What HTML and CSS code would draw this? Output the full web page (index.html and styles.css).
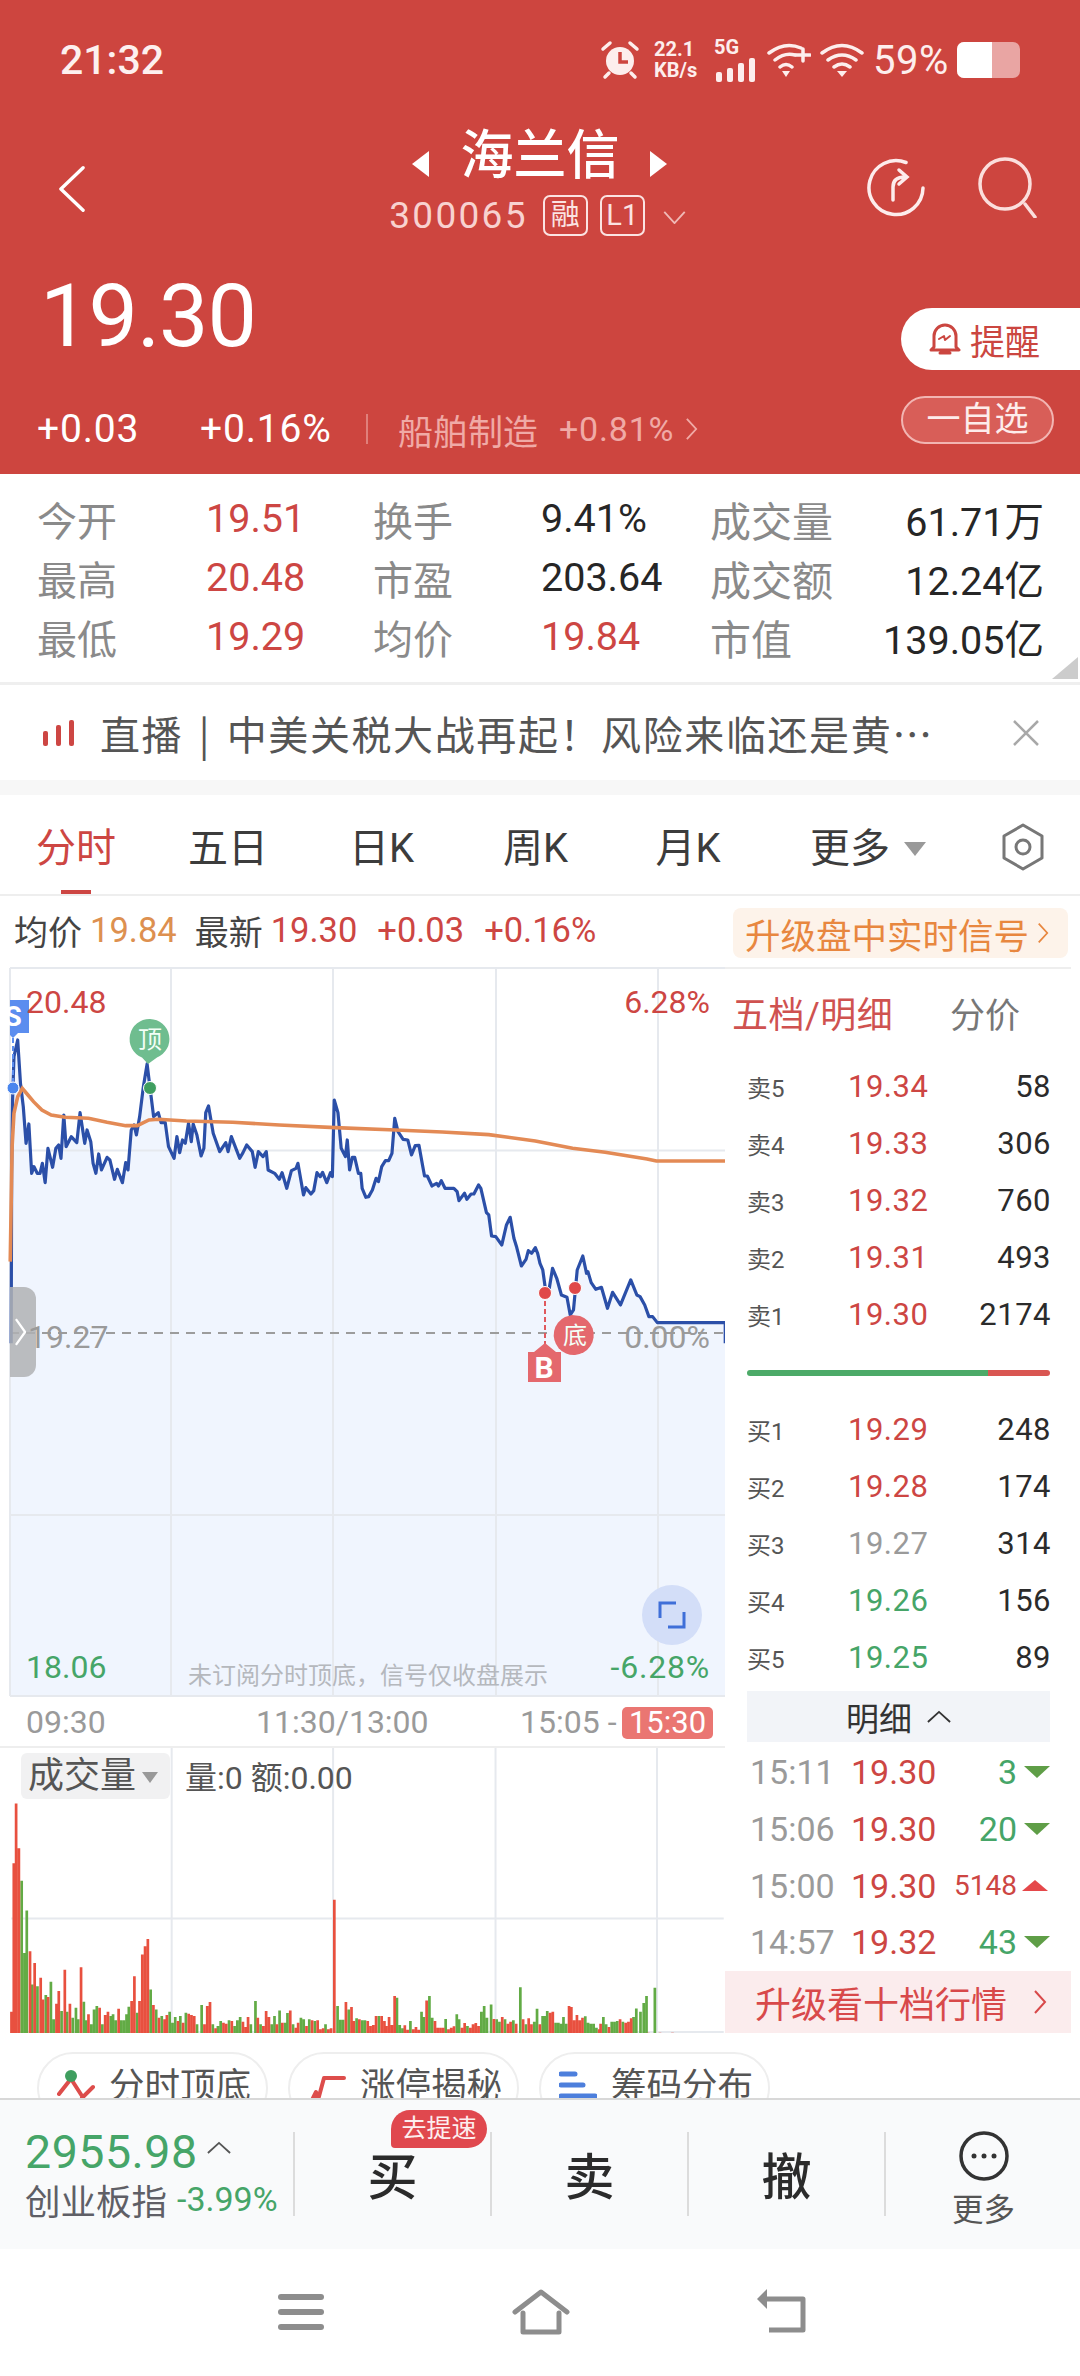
FILE: index.html
```html
<!DOCTYPE html>
<html lang="zh">
<head>
<meta charset="utf-8">
<title>海兰信</title>
<link rel="stylesheet" href="styles.css">
</head>
<body>
<div class="page">
<header class="hero">
  <div class="status">
    <span class="clock">21:32</span>
    <div class="sys">
      <svg class="i-alarm" viewBox="0 0 40 40"><circle cx="20" cy="21" r="14" fill="#fdeeed"/><path d="M20 12v10h8" class="st-red"/><path d="M3 9l7-6M37 9l-7-6M9 33l-4 4M31 33l4 4" class="st-pale"/></svg>
      <div class="speed"><span>22.1</span><span>KB/s</span></div>
      <div class="net">
        <span class="fiveg">5G</span>
        <svg class="i-bars" viewBox="0 0 40 24"><rect x="0" y="14" width="6" height="10" rx="2"/><rect x="11" y="10" width="6" height="14" rx="2"/><rect x="22" y="5" width="6" height="19" rx="2"/><rect x="33" y="0" width="6" height="24" rx="2"/></svg>
      </div>
      <svg class="i-wifi" viewBox="0 0 44 36"><path d="M2 11Q18 -1 34 6M8 18Q18 10 28 13M13 25Q19 20 25 25" class="st-pale"/><path d="M15 29h8l-4 6z" fill="#fdeeed"/><path d="M29 13h14M36 7v12" class="st-pale"/></svg>
      <svg class="i-wifi" viewBox="0 0 44 36"><path d="M2 11Q22 -4 42 11M8 18Q22 8 36 18M14 25Q22 19 30 25" class="st-pale"/><path d="M17 29h10l-5 6z" fill="#fdeeed"/></svg>
      <span class="pct">59%</span>
      <div class="battery"><div class="battery-fill"></div></div>
    </div>
  </div>
  <div class="nav">
    <div class="nav-left"><svg class="i-back" viewBox="0 0 28 48"><path d="M26 2L3 24l23 22"/></svg></div>
    <div class="nav-mid">
      <div class="title-row"><span class="tri-l"></span><h1 class="title">海兰信</h1><span class="tri-r"></span></div>
      <div class="code-row"><span class="code">300065</span><span class="tag">融</span><span class="tag">L1</span><svg class="i-down" viewBox="0 0 24 14"><path d="M1 1l11 12L23 1"/></svg></div>
    </div>
    <div class="nav-right">
      <svg class="i-refresh" viewBox="0 0 60 60"><path d="M40 4.500A27 27 0 1 0 57 30"/><path d="M27 42V29Q27 19 39 19M33 12l8 7-8 7"/></svg>
      <svg class="i-search" viewBox="0 0 62 62"><circle cx="28" cy="28" r="25"/><path d="M48 48l10 13"/></svg>
    </div>
  </div>
  <div class="quote">
    <div class="quote-left">
      <div class="price">19.30</div>
      <div class="change">
        <span class="chg-a">+0.03</span><span class="chg-b">+0.16%</span><span class="chg-sep"></span><span class="sector">船舶制造</span><span class="sector-pct">+0.81%</span><svg class="i-more" viewBox="0 0 14 26"><path d="M2 2l10 11L2 24"/></svg>
      </div>
    </div>
    <div class="quote-right">
      <div class="remind"><svg class="i-bell" viewBox="0 0 32 36"><path d="M5 26V15a11 11 0 0 1 22 0v11l3 3H2zM11 32h10" class="bell-line"/><path d="M10 18l5-3 1 4 5-4" class="bell-line thin"/></svg><span>提醒</span></div>
      <div class="watch">一自选</div>
    </div>
  </div>
</header>

<section class="stats">
  <span class="lab">今开</span><span class="val up">19.51</span><span class="lab">换手</span><span class="val">9.41%</span><span class="lab">成交量</span><span class="val end">61.71万</span>
  <span class="lab">最高</span><span class="val up">20.48</span><span class="lab">市盈</span><span class="val">203.64</span><span class="lab">成交额</span><span class="val end">12.24亿</span>
  <span class="lab">最低</span><span class="val up">19.29</span><span class="lab">均价</span><span class="val up">19.84</span><span class="lab">市值</span><span class="val end">139.05亿</span>
  <span class="corner"></span>
</section>

<section class="news">
  <svg class="i-live" viewBox="0 0 32 26"><rect x="0" y="11" width="5" height="15" rx="2"/><rect x="13" y="5" width="5" height="21" rx="2"/><rect x="26" y="0" width="5" height="26" rx="2"/></svg>
  <span class="news-text">直播 | 中美关税大战再起！风险来临还是黄…</span>
  <svg class="i-close" viewBox="0 0 28 28"><path d="M2 2l24 24M26 2L2 26"/></svg>
</section>

<nav class="tabs">
  <span class="tab active">分时</span><span class="tab">五日</span><span class="tab">日K</span><span class="tab">周K</span><span class="tab">月K</span>
  <span class="tab more">更多<i class="caret"></i></span>
  <svg class="i-gear" viewBox="0 0 44 48"><path d="M22 2l19 11v22L22 46 3 35V13z"/><circle cx="22" cy="24" r="7"/></svg>
</nav>

<div class="infoline">
  <span class="inf-l">均价</span><span class="inf-avg">19.84</span><span class="inf-l second">最新</span><span class="inf-up">19.30</span><span class="inf-up spaced">+0.03</span><span class="inf-up spaced">+0.16%</span>
  <span class="signal">升级盘中实时信号<svg class="i-more-s" viewBox="0 0 14 26"><path d="M2 2l10 11L2 24"/></svg></span>
</div>

<main class="board">
  <div class="charts">
    <div class="price-chart">
      <svg class="chart-svg" viewBox="0 0 725 738">
        <defs>
          <clipPath id="clip-line"><rect x="0" y="0" width="1560" height="1150"/></clipPath>
          <path id="pl" class="ns" d="M22 2208L25 640 27 420 30 290 38 240 44 370 50 440 56 550 62 492 68 640 73 620 80 640 86 640 91 610 97 668 103 565 113 622 120 565 126 555 131 595 137 465 142 560 153 530 165 548 172 458 182 550 187 510 195 545 200 610 206 640 212 582 218 630 230 592 236 600 246 658 252 628 263 668 270 608 275 630 282 510 288 495 293 525 300 470 308 380 316 312 322 380 330 470 340 458 346 488 355 488 362 560 374 595 380 530 386 578 392 540 398 550 405 490 411 545 415 492 423 525 432 588 438 565 442 458 448 438 458 520 472 575 485 548 490 575 497 530 515 595 522 578 530 555 542 575 548 622 555 575 565 590 572 575 576 630 590 640 600 658 606 638 616 685 626 632 636 625 640 610 652 705 657 683 668 702 674 692 681 638 688 650 693 637 702 668 710 638 714 650 718 420 726 458 733 565 742 590 746 540 751 630 757 592 762 592 770 640 775 640 778 685 786 712 792 710 800 690 808 655 813 665 820 620 828 602 835 602 842 580 848 475 855 515 866 538 876 540 884 585 892 557 900 556 908 618 912 648 918 648 928 678 938 670 942 678 948 662 956 685 975 685 982 695 986 722 998 700 1003 718 1012 702 1018 702 1028 675 1033 685 1045 758 1050 765 1056 828 1065 830 1078 855 1088 795 1096 772 1104 835 1110 862 1120 918 1130 898 1135 872 1142 880 1150 863 1155 880 1160 910 1166 930 1172 990 1180 985 1187 925 1196 955 1206 1005 1218 1012 1225 1065 1232 1050 1240 930 1252 888 1260 940 1263 935 1270 968 1280 988 1292 982 1305 1045 1316 997 1333 1035 1355 960 1368 1005 1375 1010 1385 1035 1394 1070 1402 1070 1412 1088 1558 1088 1558 2208Z"/>
        </defs>
        <g transform="scale(.4655 .3333)"><use href="#pl" class="area"/></g>
        <path class="grid" d="M10 8H725M10 190.500H725M10 555H725M10 736H725M10 8V736M171 8V736M333 8V736M496 8V736M658 8V736"/>
        <path class="zero" d="M10 373H725"/>
        <g transform="scale(.4655 .3333)">
          <use href="#pl" class="line" clip-path="url(#clip-line)"/>
          <path class="avg ns" d="M22 905L26 560 30 460 38 410 48 385 60 405 72 425 90 450 110 465 140 472 190 475 230 487 270 497 295 497 320 480 340 478 400 483 500 487 600 495 720 503 850 510 950 516 1050 524 1150 543 1230 565 1300 577 1390 597 1410 603 1558 603"/>
        </g>
        <path class="sig-dash blue" d="M13 78V128"/>
        <path class="tag-s" d="M10 40H29V73H18L13 78 10 75Z"/>
        <text class="tag-st" x="13" y="66">S</text>
        <circle class="dot-s" cx="13" cy="128" r="6"/>
        <path class="bub-g" d="M150 59a20 20 0 0 1 7 38.500L148 104 142 97.500A20 20 0 0 1 150 59Z"/>
        <text class="bub-t" x="150" y="88">顶</text>
        <circle class="dot-g" cx="150" cy="128" r="6.500"/>
        <path class="sig-dash red" d="M545 333V385"/>
        <circle class="dot-r" cx="545" cy="333" r="6.500"/>
        <circle class="dot-r" cx="575" cy="328" r="6.500"/>
        <path class="bub-r" d="M572 355L580 356A20 20 0 1 1 565 357Z"/>
        <text class="bub-t" x="575" y="384">底</text>
        <path class="tag-b" d="M545 383L556 392H561V422H528V392H534Z"/>
        <text class="tag-bt" x="544" y="418">B</text>
        <ellipse class="exp-bg" cx="672" cy="655" rx="30" ry="30"/>
        <path class="exp" d="M660 658V643H676M684 652V667H668"/>
      </svg>
      <span class="handle"><svg class="i-handle" viewBox="0 0 12 30"><path d="M1 1l10 14L1 29"/></svg></span>
      <span class="cl cl-hi up">20.48</span>
      <span class="cl cr-hi up">6.28%</span>
      <span class="cl cl-mid flat">19.27</span>
      <span class="cl cr-mid flat">0.00%</span>
      <span class="cl cl-lo down">18.06</span>
      <span class="cl cr-lo down wide">-6.28%</span>
      <span class="wm">未订阅分时顶底，信号仅收盘展示</span>
    </div>
    <div class="axis">
      <span class="ax-a">09:30</span><span class="ax-b">11:30/13:00</span><span class="ax-c">15:05 -</span><span class="ax-d">15:30</span>
    </div>
    <div class="vol-chart">
      <svg class="chart-svg" viewBox="0 0 725 286">
        <path class="grid" d="M10 171H725M10 285H725M171 0V285M333 0V285M496 0V285M658 0V285"/>
        <g transform="translate(0 -6) scale(.4655 .3333)">
          <path class="bar-g" d="M44 418V880M50 635V880M55 507V880M67 730V880M78 735V880M96 762V880M107 722V880M113 835V880M130 810V880M142 812V880M154 830V880M161 800V880M166 835V880M178 782V880M183 838V880M194 850V880M200 805V880M206 795V880M218 850V880M236 825V880M241 820V880M247 838V880M258 838V880M264 838V880M270 820V880M275 797V880M293 815V880M322 745V880M334 805V880M346 825V880M363 812V880M369 845V880M375 828V880M386 825V880M398 815V880M422 850V880M432 792V880M456 850V880M467 855V880M473 840V880M491 838V880M503 855V880M509 838V880M515 828V880M538 850V880M548 780V880M559 850V880M583 850V880M589 825V880M600 808V880M612 845V880M617 816V880M629 850V880M646 830V880M652 835V880M664 835V880M676 840V880M699 850V880M725 795V880M731 836V880M737 836V880M749 805V880M766 832V880M778 838V880M784 838V880M814 825V880M853 770V880M859 852V880M865 862V880M882 840V880M906 812V880M911 828V880M923 765V880M929 830V880M958 834V880M982 820V880M987 835V880M1005 855V880M1035 812V880M1041 795V880M1047 830V880M1056 790V880M1068 835V880M1074 842V880M1086 835V880M1104 838V880M1119 738V880M1131 850V880M1149 842V880M1155 803V880M1167 825V880M1172 825V880M1177 810V880M1195 845V880M1201 845V880M1207 848V880M1212 828V880M1218 848V880M1259 826V880M1265 845V880M1271 848V880M1277 848V880M1283 860V880M1298 828V880M1304 850V880M1316 842V880M1322 842V880M1328 840V880M1340 842V880M1363 828V880M1369 802V880M1378 812V880M1385 786V880M1391 765V880M1409 740V880"/>
          <path class="bar-r" d="M22 812V880M27 365V880M32 185V880M38 320V880M62 630V880M72 665V880M85 710V880M90 775V880M101 768V880M119 788V880M124 750V880M137 686V880M148 788V880M172 678V880M188 820V880M212 800V880M224 822V880M230 812V880M253 803V880M281 780V880M287 705V880M298 780V880M304 640V880M310 615V880M316 593V880M328 792V880M340 830V880M352 835V880M357 822V880M381 840V880M392 845V880M404 818V880M410 822V880M416 825V880M438 850V880M444 795V880M450 783V880M462 862V880M479 845V880M485 848V880M497 840V880M521 842V880M527 858V880M532 828V880M553 830V880M565 855V880M571 810V880M577 828V880M594 850V880M606 845V880M623 808V880M635 860V880M640 845V880M658 855V880M670 838V880M682 838V880M688 865V880M694 862V880M705 865V880M711 862V880M718 475V880M743 783V880M755 798V880M760 840V880M772 835V880M790 840V880M796 855V880M802 852V880M808 825V880M820 825V880M826 840V880M830 855V880M836 828V880M842 852V880M848 765V880M870 853V880M876 866V880M888 865V880M894 858V880M900 866V880M917 778V880M935 840V880M941 860V880M947 860V880M953 860V880M964 865V880M970 860V880M976 856V880M993 860V880M999 846V880M1011 860V880M1017 850V880M1023 846V880M1029 855V880M1062 834V880M1080 828V880M1092 848V880M1098 842V880M1110 848V880M1125 835V880M1137 832V880M1143 850V880M1161 850V880M1183 815V880M1189 812V880M1224 795V880M1229 798V880M1235 838V880M1241 822V880M1247 838V880M1253 830V880M1289 865V880M1292 848V880M1310 858V880M1334 835V880M1346 845V880M1352 842V880M1358 832V880M1395 875V880M1420 875V880M1447 875V880"/>
        </g>
      </svg>
      <span class="vol-tag">成交量<i class="caret small"></i></span>
      <span class="vol-info">量:0 额:0.00</span>
    </div>
  </div>
  <aside class="book">
    <div class="book-head"><span class="bh-a">五档/明细</span><span class="bh-b">分价</span></div>
    <div class="levels">
      <div class="lv"><span class="lv-l">卖5</span><span class="up">19.34</span><span class="lv-q">58</span></div>
      <div class="lv"><span class="lv-l">卖4</span><span class="up">19.33</span><span class="lv-q">306</span></div>
      <div class="lv"><span class="lv-l">卖3</span><span class="up">19.32</span><span class="lv-q">760</span></div>
      <div class="lv"><span class="lv-l">卖2</span><span class="up">19.31</span><span class="lv-q">493</span></div>
      <div class="lv"><span class="lv-l">卖1</span><span class="up">19.30</span><span class="lv-q">2174</span></div>
    </div>
    <div class="ratio"><div class="ratio-g"></div><div class="ratio-r"></div></div>
    <div class="levels buys">
      <div class="lv"><span class="lv-l">买1</span><span class="up">19.29</span><span class="lv-q">248</span></div>
      <div class="lv"><span class="lv-l">买2</span><span class="up">19.28</span><span class="lv-q">174</span></div>
      <div class="lv"><span class="lv-l">买3</span><span class="flat">19.27</span><span class="lv-q">314</span></div>
      <div class="lv"><span class="lv-l">买4</span><span class="down">19.26</span><span class="lv-q">156</span></div>
      <div class="lv"><span class="lv-l">买5</span><span class="down">19.25</span><span class="lv-q">89</span></div>
    </div>
    <div class="detail-head">明细<svg class="i-up" viewBox="0 0 26 14"><path d="M1 13L13 2l12 11"/></svg></div>
    <div class="ticks">
      <div class="tk"><span class="tk-t">15:11</span><span class="up">19.30</span><span class="tk-q down">3</span><i class="tri-d"></i></div>
      <div class="tk"><span class="tk-t">15:06</span><span class="up">19.30</span><span class="tk-q down">20</span><i class="tri-d"></i></div>
      <div class="tk"><span class="tk-t">15:00</span><span class="up">19.30</span><span class="tk-q up small-q">5148</span><i class="tri-u"></i></div>
      <div class="tk"><span class="tk-t">14:57</span><span class="up">19.32</span><span class="tk-q down">43</span><i class="tri-d"></i></div>
    </div>
    <div class="upgrade"><span>升级看十档行情</span><svg class="i-more-u" viewBox="0 0 14 26"><path d="M2 2l10 11L2 24"/></svg></div>
  </aside>
</main>

<div class="chips">
  <span class="chip"><svg class="i-chip" viewBox="0 0 38 36"><path d="M2 24L13 10M16 12l9 14M25 28l11-11" class="chip-r"/><circle cx="14" cy="6" r="6" fill="#3f9e5f"/></svg>分时顶底</span>
  <span class="chip"><svg class="i-chip" viewBox="0 0 38 36"><path d="M2 34l6-12 2 8 6-22h20" class="chip-r"/></svg>涨停揭秘</span>
  <span class="chip"><svg class="i-chip" viewBox="0 0 38 36"><path d="M2 4h14M2 15h22M2 26h34" class="chip-b"/></svg>筹码分布</span>
</div>

<footer class="trade">
  <div class="index">
    <div class="idx-top"><span class="idx-val">2955.98</span><svg class="i-up idx-up" viewBox="0 0 26 14"><path d="M1 13L13 2l12 11"/></svg></div>
    <div class="idx-bot"><span class="idx-name">创业板指</span><span class="idx-pct">-3.99%</span></div>
  </div>
  <div class="act"><span class="act-t">买</span><span class="speedup">去提速</span></div>
  <div class="act"><span class="act-t">卖</span></div>
  <div class="act"><span class="act-t">撤</span></div>
  <div class="act last"><svg class="i-dots" viewBox="0 0 50 50"><circle cx="25" cy="25" r="23"/><circle class="dot" cx="15" cy="25" r="2.500"/><circle class="dot" cx="25" cy="25" r="2.500"/><circle class="dot" cx="35" cy="25" r="2.500"/></svg><span class="act-m">更多</span></div>
</footer>

<div class="sysnav">
  <svg class="i-menu" viewBox="0 0 46 36"><rect x="0" y="0" width="46" height="6" rx="3"/><rect x="0" y="15" width="46" height="6" rx="3"/><rect x="0" y="30" width="46" height="6" rx="3"/></svg>
  <svg class="i-home" viewBox="0 0 58 46"><path d="M3 23L29 3l26 20M11 24V43H47V24" /></svg>
  <svg class="i-ret" viewBox="0 0 50 44"><path d="M3 10H46V41H12"/><path class="fill" d="M10 0V20L0 10Z"/></svg>
</div>
</div>
</body>
</html>
```
FILE: styles.css
```css
* { box-sizing: border-box; margin: 0; padding: 0; }
html, body { background: #fff; }
body { font-family: Roboto, "Noto Sans CJK SC", sans-serif; color: #2b2b2b; }
i { display: inline-block; font-style: normal; }
.page { position: relative; width: 1080px; height: 2376px; overflow: hidden; display: flex; flex-direction: column; }
.up { color: #cd4643; }
.down { color: #46a568; }
.flat { color: #9a9a9a; }

/* hero */
.hero { height: 474px; background: #cd453f; color: #fff; display: flex; flex-direction: column; flex: none; }
.status { height: 120px; display: flex; align-items: center; justify-content: space-between; padding: 0 60px 0 60px; }
.clock { font-size: 41px; font-weight: 500; color: #fdf0ef; }
.sys { display: flex; align-items: center; }
.i-alarm { width: 40px; height: 40px; margin-right: 14px; }
.st-red { fill: none; stroke: #cd453f; stroke-width: 3.500; }
.st-pale { fill: none; stroke: #fdeeed; stroke-width: 3.500; stroke-linecap: round; }
.speed { display: flex; flex-direction: column; font-size: 20px; font-weight: 700; line-height: 21px; color: #fdeeed; width: 45px; margin-right: 15px; }
.net { width: 42px; height: 40px; position: relative; margin-right: 11px; }
.fiveg { position: absolute; left: 0; top: -5px; font-size: 20px; font-weight: 700; color: #fdeeed; }
.i-bars { position: absolute; left: 2px; bottom: -2px; width: 40px; height: 24px; fill: #fdeeed; }
.i-wifi { width: 44px; height: 36px; margin-right: 9px; }
.pct { font-size: 40px; font-weight: 400; color: #fdeeed; margin-right: 10px; width: 74px; white-space: nowrap; letter-spacing: .5px; }
.battery { width: 63px; height: 36px; border-radius: 7px; background: #e9a5a3; overflow: hidden; }
.battery-fill { width: 35px; height: 36px; background: #fff; }

.nav { display: grid; grid-template-columns: 1fr auto 1fr; height: 118px; flex: none; }
.nav-left { padding: 45px 0 0 58px; }
.i-back { width: 27px; height: 48px; fill: none; stroke: #fff; stroke-width: 3.500; stroke-linecap: round; stroke-linejoin: round; }
.nav-mid { display: flex; flex-direction: column; align-items: center; }
.title-row { height: 72px; display: flex; align-items: center; }
.title { font-size: 53px; font-weight: 500; color: #fff; margin: 0 31px; line-height: 72px; }
.tri-l, .tri-r { width: 0; height: 0; margin-top: 15px; border-top: 13px solid transparent; border-bottom: 13px solid transparent; }
.tri-l { border-right: 17px solid #fff; }
.tri-r { border-left: 17px solid #fff; }
.code-row { height: 46px; display: flex; align-items: center; margin-right: 5px; }
.code { font-size: 37px; color: #f8d2d0; letter-spacing: 2.300px; margin-right: 15px; }
.tag { width: 45px; height: 41px; border: 2px solid #fbe3e2; border-radius: 7px; font-size: 29px; line-height: 36px; text-align: center; color: #fbe3e2; margin-right: 12px; }
.i-down { width: 23px; height: 13px; margin: 4px 0 0 6px; fill: none; stroke: #f0b9b6; stroke-width: 2; }
.nav-right { display: flex; justify-content: flex-end; align-items: flex-start; padding: 38px 41px 0 0; gap: 51px; }
.i-refresh { width: 60px; height: 60px; fill: none; stroke: #fdecec; stroke-width: 3.500; stroke-linecap: round; }
.i-search { width: 62px; height: 62px; fill: none; stroke: #fbdedc; stroke-width: 3.500; stroke-linecap: round; margin-top: -2px; }

.quote { display: flex; justify-content: space-between; flex: 1; }
.quote-left { padding-left: 37px; display: flex; flex-direction: column; }
.price { font-size: 88px; line-height: 92px; margin: 32px 0 0 3px; letter-spacing: -1px; color: #fff; }
.change { display: flex; align-items: center; height: 60px; margin-top: 37px; }
.chg-a { font-size: 39px; width: 163px; letter-spacing: .8px; }
.chg-b { font-size: 39px; width: 166px; letter-spacing: .8px; }
.chg-sep { width: 2px; height: 30px; background: #e0807b; margin-right: 30px; }
.sector { font-size: 35px; color: #f0aaa6; margin-right: 21px; }
.sector-pct { font-size: 34px; color: #f0aaa6; margin-right: 11px; letter-spacing: .8px; }
.i-more { width: 13px; height: 26px; fill: none; stroke: #f0aaa6; stroke-width: 2; }
.quote-right { display: flex; flex-direction: column; align-items: flex-end; padding-top: 70px; }
.remind { width: 179px; height: 62px; background: #fff; border-radius: 31px 0 0 31px; display: flex; align-items: center; padding-left: 28px; color: #cb4640; font-size: 35px; gap: 9px; }
.i-bell { width: 32px; height: 36px; }
.bell-line { fill: none; stroke: #cb4640; stroke-width: 3; stroke-linejoin: round; stroke-linecap: round; }
.bell-line.thin { stroke-width: 2; }
.watch { width: 153px; height: 48px; margin: 26px 26px 0 0; border: 2px solid #f2b5b2; background: #d85e58; border-radius: 24px; font-size: 34px; line-height: 42px; text-align: center; color: #fdeceb; }

/* stats */
.stats { position: relative; flex: none; height: 211px; border-bottom: 3px solid #efefef; display: grid; grid-template-columns: 169px 167px 168px 169px 122px 212px; grid-auto-rows: 59px; padding: 15px 0 0 37px; align-items: center; }
.lab { font-size: 40px; color: #8a8a8a; white-space: nowrap; }
.lab:nth-of-type(6n+5) { font-size: 41px; }
.val { font-size: 39.500px; color: #262626; white-space: nowrap; }
.val.up { color: #cd4643; }
.val.end { text-align: right; }
.corner { position: absolute; right: 2px; bottom: 3px; width: 26px; height: 22px; background: #cccccc; clip-path: polygon(100% 0, 100% 100%, 0 100%); }

/* news */
.news { flex: none; display: flex; align-items: center; padding-left: 43px; border-bottom: 15px solid #f7f7f7; box-sizing: content-box; height: 95px; }
.i-live { width: 32px; height: 26px; fill: #cd4643; margin-right: 25px; }
.news-text { font-family: "Noto Sans CJK SC", sans-serif; font-size: 40px; letter-spacing: 1.600px; word-spacing: 5px; color: #555; white-space: nowrap; width: 912px; }
.i-close { width: 28px; height: 28px; fill: none; stroke: #a8a8a8; stroke-width: 2.500; }

/* tabs */
.tabs { position: relative; flex: none; height: 101px; border-bottom: 2px solid #eeeeee; display: grid; grid-template-columns: 152px 152px 155px 153px 152px 1fr; align-items: center; }
.tab { font-size: 40px; color: #3c3c3c; text-align: center; }
.tab.active { color: #cd4643; position: relative; align-self: stretch; display: flex; align-items: center; justify-content: center; }
.tab.active::after { content: ""; position: absolute; left: 61px; bottom: 0; width: 30px; height: 4px; background: #cd4643; }
.tab.more { text-align: left; padding-left: 46px; }
.caret { width: 0; height: 0; border-left: 11px solid transparent; border-right: 11px solid transparent; border-top: 14px solid #999; margin-left: 14px; vertical-align: 6px; }
.i-gear { position: absolute; left: 1001px; top: 28px; width: 44px; height: 48px; fill: none; stroke: #777; stroke-width: 3; stroke-linejoin: round; }

/* info line */
.infoline { flex: none; height: 64px; display: flex; align-items: center; padding: 4px 0 0 14px; font-size: 34.500px; white-space: nowrap; }
.inf-l { color: #444; font-size: 34px; margin-right: 8px; }
.inf-l.second { margin-left: 18px; }
.inf-avg { color: #dd9050; }
.inf-up { color: #cd4643; }
.inf-up.spaced { margin-left: 20px; }
.signal { position: absolute; left: 733px; top: 908px; width: 335px; height: 50px; background: #fdf3ea; border-radius: 8px; color: #e8873f; font-size: 35.500px; display: flex; align-items: center; padding-left: 12px; gap: 8px; }
.i-more-s { width: 12px; height: 24px; fill: none; stroke: #e8873f; stroke-width: 2; }

/* board */
.board { flex: none; height: 1073px; display: flex; }
.charts { width: 725px; flex: none; display: flex; flex-direction: column; }
.price-chart { position: relative; height: 738px; flex: none; }
.chart-svg { position: absolute; left: 0; top: 0; width: 725px; height: 100%; display: block; }
.ns { vector-effect: non-scaling-stroke; }
.area { fill: #f0f5fe; stroke: none; }
.grid { fill: none; stroke: #e6e9ee; stroke-width: 2; }
.zero { fill: none; stroke: #9c9c9c; stroke-width: 2; stroke-dasharray: 9 7; }
.line { fill: none; stroke: #2b4fa8; stroke-width: 3.200; stroke-linejoin: round; }
.avg { fill: none; stroke: #e38a55; stroke-width: 3.600; }
.sig-dash { fill: none; stroke-width: 2; stroke-dasharray: 5 3; }
.sig-dash.blue { stroke: #5b8def; }
.sig-dash.red { stroke: #e0595e; }
.tag-s { fill: #5b8def; }
.tag-st { font-size: 28px; font-weight: 700; fill: #fff; text-anchor: middle; }
.dot-s { fill: #4a86ee; stroke: #fff; stroke-width: 1; }
.bub-g { fill: #6fbd8f; }
.bub-r { fill: #e4686d; }
.bub-t { font-size: 24px; fill: #f3fff7; text-anchor: middle; }
.dot-g { fill: #3f9e5f; stroke: #fff; stroke-width: 1; }
.dot-r { fill: #e04848; stroke: #fff; stroke-width: 1; }
.tag-b { fill: #e4686d; }
.tag-bt { font-size: 30px; font-weight: 700; fill: #fff; text-anchor: middle; }
.exp-bg { fill: #d3def8; }
.exp { fill: none; stroke: #3f6fd8; stroke-width: 3; }
.handle { position: absolute; left: 10px; top: 327px; width: 26px; height: 90px; background: rgba(176,177,180,.85); border-radius: 0 12px 12px 0; display: flex; align-items: center; padding-left: 5px; }
.i-handle { width: 11px; height: 28px; fill: none; stroke: #fff; stroke-width: 2.500; }
.cl { position: absolute; font-size: 32px; line-height: 36px; }
.cl-hi { left: 26px; top: 24px; }
.cr-hi { right: 15px; top: 24px; }
.cl-mid { left: 28px; top: 359px; }
.cr-mid { right: 15px; top: 359px; }
.cl-lo { left: 26px; top: 689px; }
.cr-lo { right: 15px; top: 689px; }
.cr-lo.wide { letter-spacing: .8px; }
.wm { position: absolute; left: 188px; top: 700px; font-size: 24px; line-height: 32px; color: #b5b8bd; white-space: nowrap; }

.axis { flex: none; height: 48px; display: flex; align-items: center; font-size: 32px; color: #9a9a9a; padding-left: 26px; position: relative; white-space: nowrap; }
.ax-a { width: 230px; }
.ax-b { width: 264px; }
.ax-c { width: 102px; }
.ax-d { width: 91px; height: 32px; background: #ea7672; color: #fff; border-radius: 5px; text-align: center; line-height: 32px; font-size: 31px; margin-top: 2px; }

.vol-chart { position: relative; flex: 1; border-top: 2px solid #eeeeee; }
.vol-tag { position: absolute; left: 21px; top: 5px; width: 149px; height: 46px; background: #f1f1f2; border-radius: 6px; font-size: 36px; line-height: 46px; color: #555; padding-left: 7px; white-space: nowrap; }
.caret.small { border-left-width: 8px; border-right-width: 8px; border-top-width: 11px; margin-left: 6px; vertical-align: 5px; }
.vol-info { position: absolute; left: 185px; top: 12px; font-size: 32px; line-height: 36px; color: #555; white-space: nowrap; }
.bar-r { fill: none; stroke: #e8503f; stroke-width: 2.700; vector-effect: non-scaling-stroke; }
.bar-g { fill: none; stroke: #62ab45; stroke-width: 2.700; vector-effect: non-scaling-stroke; }

/* order book */
.book { width: 346px; flex: none; padding-top: 7px; display: flex; flex-direction: column; }
.book-head { border-top: 2px solid #eeeeee; height: 88px; display: flex; align-items: center; padding-left: 7px; }
.bh-a { font-size: 36px; color: #cf5250; letter-spacing: .5px; width: 218px; white-space: nowrap; }
.bh-b { font-size: 35px; color: #777; }
.levels { padding: 3px 20px 0 22px; }
.lv { height: 57px; display: grid; grid-template-columns: 101px 80px 1fr; align-items: center; font-size: 31px; letter-spacing: .5px; }
.lv-l { font-size: 24px; color: #555; letter-spacing: 0; }
.lv-q { text-align: right; color: #2b2b2b; }
.ratio { margin: 27px 21px 0 22px; height: 6px; display: flex; border-radius: 3px; overflow: hidden; }
.ratio-g { width: 241px; background: #4caa68; }
.ratio-r { flex: 1; background: #d95652; }
.buys { padding-top: 25px; }
.detail-head { margin: 5px 21px 0 22px; height: 51px; background: #f2f4f8; display: flex; align-items: center; justify-content: center; font-size: 33px; gap: 15px; color: #333; }
.i-up { width: 24px; height: 13px; fill: none; stroke: #333; stroke-width: 2; }
.ticks { padding: 2px 21px 0 25px; }
.tk { height: 56.700px; display: grid; grid-template-columns: 101px 84px 1fr 33px; align-items: center; font-size: 34px; }
.tk-t { color: #9a9a9a; }
.tk-q { text-align: right; }
.small-q { font-size: 28px; }
.tri-d, .tri-u { width: 0; height: 0; justify-self: end; border-left: 13px solid transparent; border-right: 13px solid transparent; }
.tri-d { border-top: 12px solid #5f9e47; }
.tri-u { border-bottom: 11px solid #e5484a; margin-right: 2px; }
.upgrade { flex: 1; background: #fbeced; display: flex; align-items: center; justify-content: space-between; padding: 0 24px 0 30px; color: #d8494a; font-size: 36px; white-space: nowrap; }
.i-more-u { width: 14px; height: 26px; fill: none; stroke: #d8494a; stroke-width: 2; }

/* chips */
.chips { flex: none; height: 65px; overflow: hidden; display: flex; gap: 20px; padding: 19px 0 0 37px; }
.chip { width: 231px; height: 72px; flex: none; border: 2px solid #eeeeee; border-radius: 36px; display: flex; align-items: flex-start; padding: 10px 0 0 18px; gap: 14px; font-size: 35.500px; line-height: 44px; color: #555; white-space: nowrap; }
.i-chip { width: 38px; height: 36px; margin-top: 6px; }
.chip-r { fill: none; stroke: #dd4d4b; stroke-width: 4; stroke-linecap: round; stroke-linejoin: round; }
.chip-b { fill: none; stroke: #4d7fdc; stroke-width: 5; stroke-linecap: round; }

/* trade bar */
.trade { flex: none; height: 151px; background: #f9fafb; border-top: 2px solid #d8d8d8; display: flex; padding-top: 32px; align-items: flex-start; position: relative; }
.index { width: 295px; height: 84px; padding-left: 25px; border-right: 2px solid #dcdcdc; flex: none; }
.idx-top { display: flex; align-items: center; height: 44px; margin-top: -2px; }
.idx-val { font-size: 46.500px; color: #46a568; letter-spacing: .5px; }
.i-up.idx-up { margin-left: 9px; stroke: #555; margin-bottom: 10px; }
.idx-bot { display: flex; align-items: center; height: 44px; margin-top: 3px; white-space: nowrap; }
.idx-name { font-size: 35.500px; color: #5f5f66; margin-right: 10px; }
.idx-pct { font-size: 34px; color: #46a568; }
.act { position: relative; width: 197px; height: 84px; flex: none; border-right: 2px solid #dcdcdc; display: flex; flex-direction: column; align-items: center; }
.act-t { font-size: 50px; line-height: 60px; margin-top: 16px; color: #2b2b2b; font-weight: 500; }
.act.last { border-right: none; width: 195px; }
.i-dots { width: 50px; height: 50px; margin-top: -1px; flex: none; fill: none; stroke: #333; stroke-width: 3.500; }
.i-dots .dot { fill: #333; stroke: none; }
.act-m { font-size: 31.500px; line-height: 42px; margin-top: 9px; color: #555; white-space: nowrap; }
.speedup { position: absolute; left: 96px; top: -22px; width: 96px; height: 38px; background: #e0484e; border-radius: 19px 19px 19px 4px; color: #fdeeee; font-size: 25px; line-height: 38px; text-align: center; white-space: nowrap; }

/* system nav */
.sysnav { flex: 1; background: #fff; position: relative; display: grid; grid-template-columns: 278px 234px 245px auto; align-items: start; padding-top: 40px; }
.i-menu { grid-column: 2; width: 46px; height: 36px; fill: #8d8d8d; margin-top: 5px; justify-self: start; }
.i-home { grid-column: 3; width: 58px; height: 46px; fill: none; stroke: #8d8d8d; stroke-width: 5; stroke-linejoin: round; stroke-linecap: round; }
.i-ret { grid-column: 4; width: 50px; height: 44px; fill: none; stroke: #8d8d8d; stroke-width: 5; stroke-linejoin: round; }
.i-ret .fill { fill: #8d8d8d; stroke: none; }
```
